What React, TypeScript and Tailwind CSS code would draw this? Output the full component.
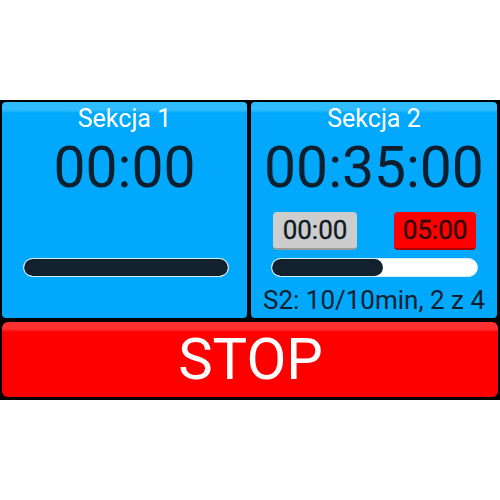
import * as React from 'react';

// Tło paneli sekcji z jaśniejszym paskiem u góry
const panelBg =
  'bg-[linear-gradient(to_bottom,#2ebbff_0px,#2ebbff_8px,#02a8fb_11px,#02a8fb_100%)]';

interface ProgressBarProps {
  value: number;
  className?: string;
}

const ProgressBar: React.FC<ProgressBarProps> = ({ value, className }) => (
  <div className={className}>
    <div className="h-[19px] overflow-hidden rounded-full border border-[#d6eef9] bg-white">
      <div className="h-full rounded-full bg-[#13212f]" style={{ width: `${value}%` }} />
    </div>
  </div>
);

export default function App() {
  return (
    <div className="h-[500px] w-[500px] bg-white pt-[100px] font-['Roboto',sans-serif]">
      <div className="flex h-[300px] flex-col gap-[4px] bg-black px-[2px] pt-[2px] pb-[3px]">
        <div className="flex h-[216px] gap-[4px]">
          {/* Sekcja 1 */}
          <div className={`flex w-[245px] flex-col rounded-[4px] pt-[3px] ${panelBg}`}>
            <div className="text-center text-[25px] leading-[28px] text-white">Sekcja 1</div>
            <div className="mt-[5px] text-center text-[57px] leading-[60px] text-[#0d1f2d]">00:00</div>
            <ProgressBar value={100} className="mt-[60px] ml-[21px] mr-[18px]" />
          </div>

          {/* Sekcja 2 */}
          <div className={`flex w-[246px] flex-col rounded-[4px] pt-[3px] ${panelBg}`}>
            <div className="text-center text-[25px] leading-[28px] text-white">Sekcja 2</div>
            <div className="mt-[5px] text-center text-[57px] leading-[60px] text-[#0d1f2d]">00:35:00</div>
            <div className="mt-[14px] flex justify-between pl-[22px] pr-[21px]">
              <button className="h-[38px] w-[84px] rounded-[4px] border-b-2 border-[#9a9a9a] bg-[#cdcdcd] text-[26px] leading-[36px] text-[#111a22] [-webkit-text-stroke:0.3px_#111a22]">
                00:00
              </button>
              <button className="h-[38px] w-[82px] rounded-[4px] border-b-2 border-[#b00000] bg-[#ff0000] text-[26px] leading-[36px] text-[#2a0606] [-webkit-text-stroke:0.3px_#2a0606]">
                05:00
              </button>
            </div>
            <ProgressBar value={54} className="mt-[8px] ml-[20px] mr-[19px]" />
            <div className="mt-[8px] text-center text-[26px] leading-[30px] text-[#0d1f2d]">
              S2: 10/10min, 2 z 4
            </div>
          </div>
        </div>

        {/* Przycisk STOP */}
        <button className="h-[75px] w-full rounded-[6px] bg-[linear-gradient(to_bottom,#ff3030_0px,#ff3030_7px,#ff0000_10px,#ff0000_100%)] pl-[1px] text-[58px] leading-[75px] text-white">
          STOP
        </button>
      </div>
    </div>
  );
}
